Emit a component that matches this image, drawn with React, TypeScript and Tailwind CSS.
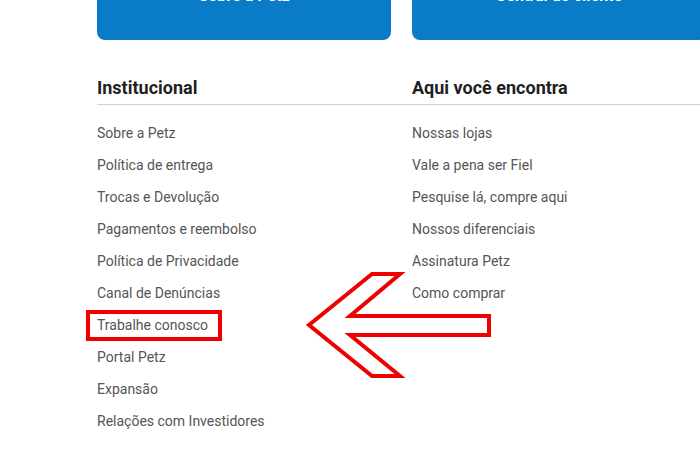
import React from "react";

const institucional = [
  "Sobre a Petz",
  "Política de entrega",
  "Trocas e Devolução",
  "Pagamentos e reembolso",
  "Política de Privacidade",
  "Canal de Denúncias",
  "Trabalhe conosco",
  "Portal Petz",
  "Expansão",
  "Relações com Investidores",
];

const encontra = [
  "Nossas lojas",
  "Vale a pena ser Fiel",
  "Pesquise lá, compre aqui",
  "Nossos diferenciais",
  "Assinatura Petz",
  "Como comprar",
];

const LinkList = ({ items }: { items: string[] }) => (
  <ul className="flex flex-col pt-[12px]">
    {items.map((item) => (
      <li key={item} className="h-[32px] flex items-center">
        {item === "Trabalhe conosco" ? (
          <span className="-ml-[11px] border-4 border-[#ee0000] pl-[7px] pr-[10px] h-[31px] flex items-center">
            {item}
          </span>
        ) : (
          <span>{item}</span>
        )}
      </li>
    ))}
  </ul>
);

export default function App() {
  return (
    <div
      className="relative w-[700px] h-[467px] overflow-hidden bg-white"
      style={{ fontFamily: "Roboto, 'Liberation Sans', sans-serif" }}
    >
      <div className="pl-[97px]">
        {/* Top buttons, cut off by the viewport */}
        <div className="grid grid-cols-[294px_294px] gap-x-[21px] -mt-[48px]">
          <button className="h-[88px] rounded-lg bg-[#0a7bc6] text-white font-bold text-base">
            Sobre a Petz
          </button>
          <button className="h-[88px] rounded-lg bg-[#0a7bc6] text-white font-bold text-base">
            Central do cliente
          </button>
        </div>

        {/* Headings */}
        <div className="mt-[36px] flex border-b border-[#cfcfcf] pb-[4px]">
          <h2 className="w-[315px] text-[18px] leading-[24px] font-bold text-[#1f1f1f]">
            Institucional
          </h2>
          <h2 className="text-[18px] leading-[24px] font-bold text-[#1f1f1f]">
            Aqui você encontra
          </h2>
        </div>

        <div className="grid grid-cols-[294px_294px] gap-x-[21px] text-[14px] text-[#555555]">
          <LinkList items={institucional} />
          <LinkList items={encontra} />
        </div>
      </div>

      {/* Annotation arrow */}
      <svg
        className="absolute left-0 top-0 pointer-events-none"
        width="700"
        height="467"
        viewBox="0 0 700 467"
      >
        <polygon
          points="309,325 372,274 400,274 350,316 489,316 489,335 350,335 400,376 372,376"
          fill="none"
          stroke="#ee0000"
          strokeWidth="4"
        />
      </svg>
    </div>
  );
}
